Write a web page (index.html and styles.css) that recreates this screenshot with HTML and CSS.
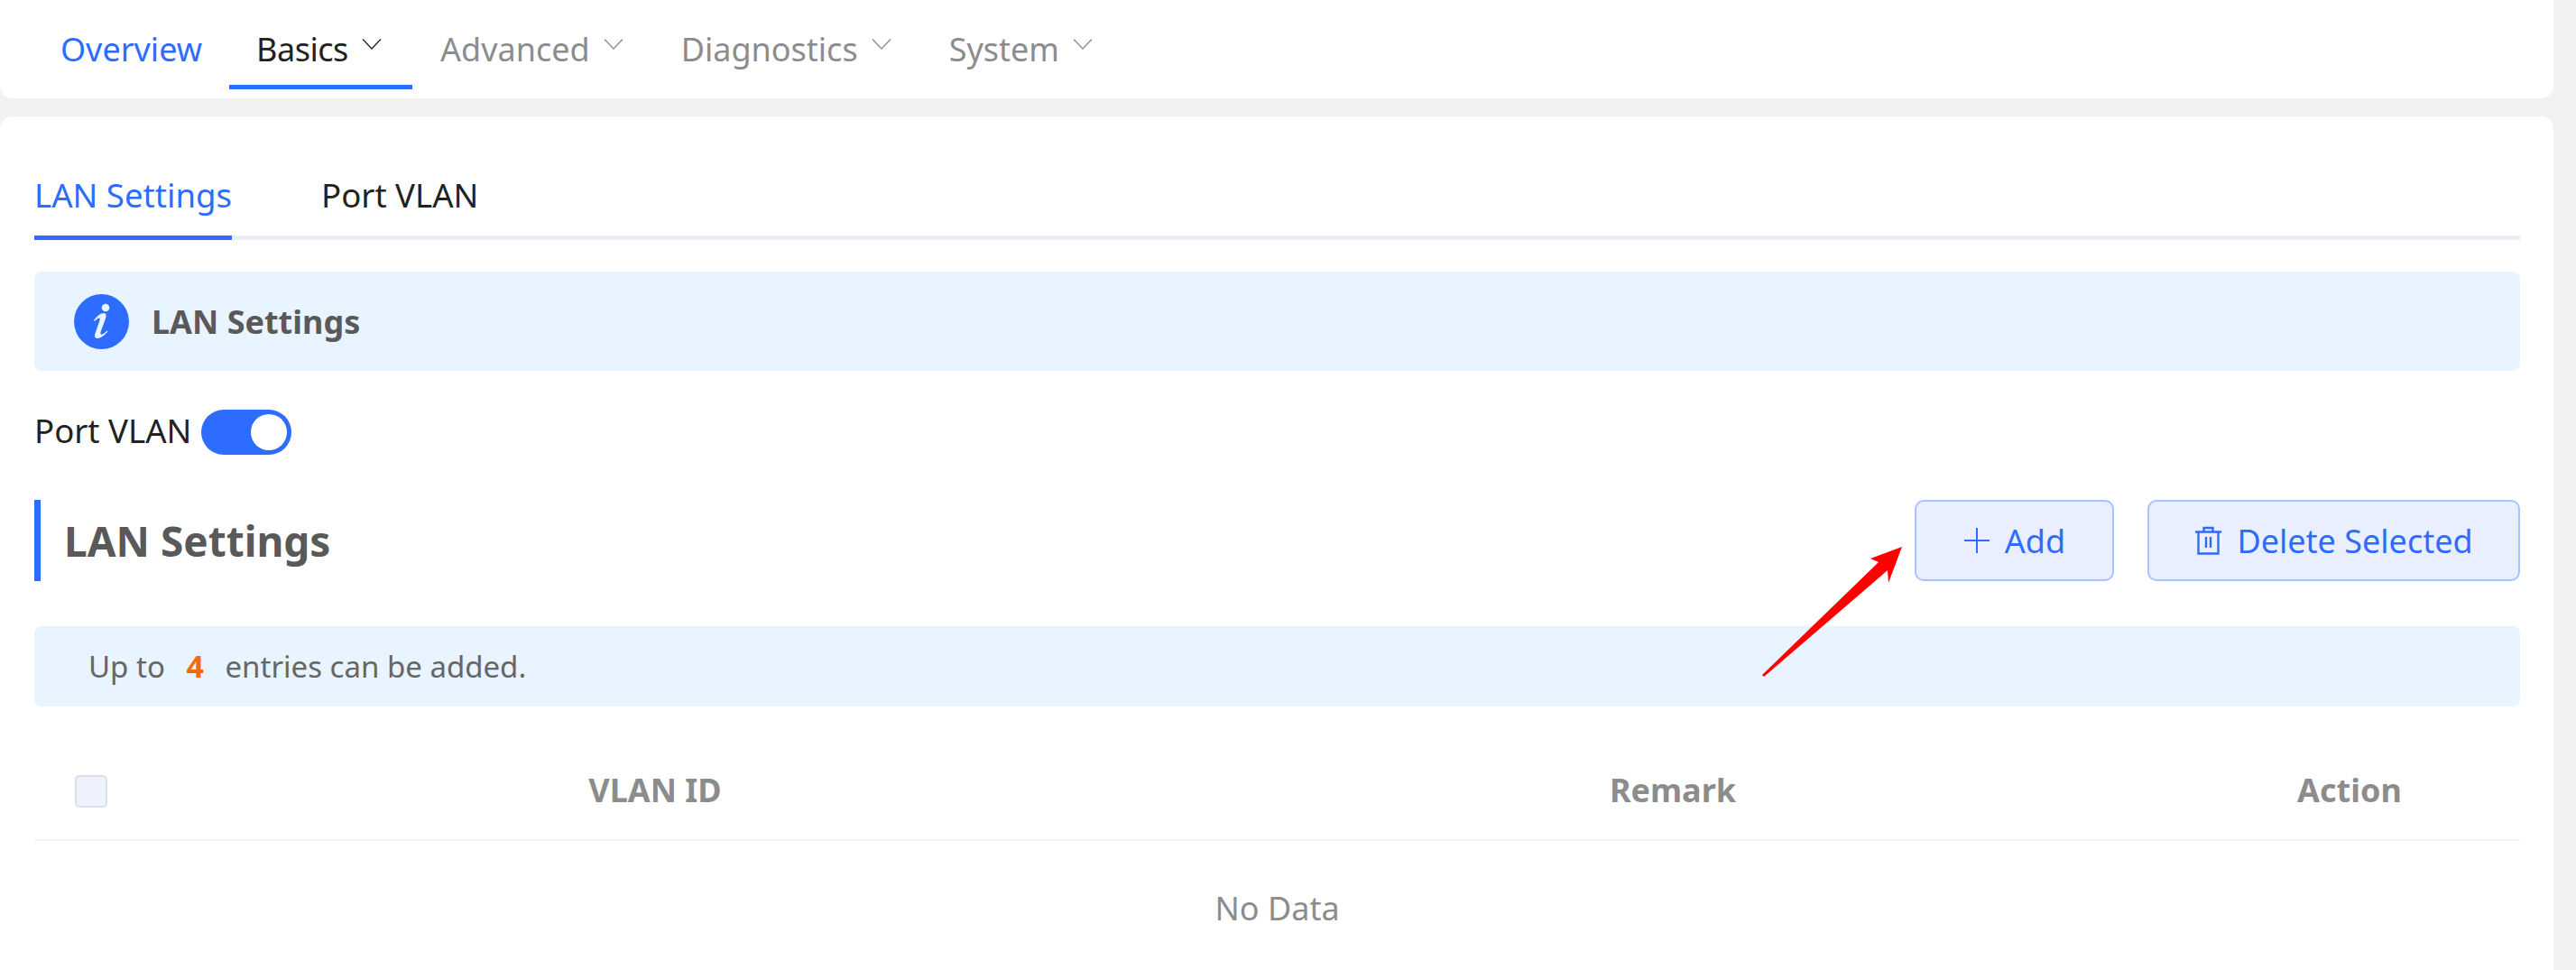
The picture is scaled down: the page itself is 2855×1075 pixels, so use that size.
FILE: index.html
```html
<!DOCTYPE html>
<html lang="en">
<head>
<meta charset="utf-8">
<title>LAN Settings</title>
<link rel="stylesheet" href="styles.css">
</head>
<body>
<div class="page">
  <nav class="topnav">
    <a class="nav-item nav-overview">Overview</a>
    <a class="nav-item nav-active">Basics<svg class="chev" viewBox="0 0 22 14"><path d="M1 1.5 11 12 21 1.5"/></svg></a>
    <a class="nav-item">Advanced<svg class="chev" viewBox="0 0 22 14"><path d="M1 1.5 11 12 21 1.5"/></svg></a>
    <a class="nav-item">Diagnostics<svg class="chev" viewBox="0 0 22 14"><path d="M1 1.5 11 12 21 1.5"/></svg></a>
    <a class="nav-item">System<svg class="chev" viewBox="0 0 22 14"><path d="M1 1.5 11 12 21 1.5"/></svg></a>
  </nav>
  <main class="card">
    <div class="tabs">
      <a class="tab tab-active">LAN Settings</a>
      <a class="tab">Port VLAN</a>
    </div>
    <div class="banner">
      <svg class="info-icon" viewBox="0 0 61 61"><circle cx="30.5" cy="30.5" r="30.5" fill="#2d6cff"/><circle cx="35" cy="15" r="4.300" fill="#e8f4ff"/><path d="M22 29C25 25 29 21 33 21C36 21 36 24 35 27L29.500 42C29 44 30 45 31 44.500C33 44 35 42 36.500 40.500L37.500 41.500C34 45 30 49 26 49C23 49 22.500 46.500 23.500 43.500L28.500 29C29 26.500 28 26 26.500 27C25 28 23.800 29 22.800 30Z" fill="#e8f4ff"/></svg>
      <span class="banner-text">LAN Settings</span>
    </div>
    <div class="switch-row">
      <span class="switch-label">Port VLAN</span>
      <span class="switch"><span class="switch-thumb"></span></span>
    </div>
    <div class="section-head">
      <h2 class="section-title">LAN Settings</h2>
      <div class="actions">
        <button class="btn btn-add"><svg class="btn-plus" viewBox="0 0 30 30"><path d="M15 1v28M1 15h28"/></svg>Add</button>
        <button class="btn btn-del"><svg class="btn-trash" viewBox="0 0 31 32"><path d="M1 6.500h29M4.500 6.500V30.500h22V6.500M10.500 6.500V2h10v4.500M13 12v12M18 12v12"/></svg>Delete Selected</button>
      </div>
    </div>
    <div class="note">Up to <b class="note-num">4</b> entries can be added.</div>
    <div class="thead">
      <span class="cell-check"><span class="checkbox"></span></span>
      <span class="th">VLAN ID</span>
      <span class="th">Remark</span>
      <span class="th">Action</span>
    </div>
    <div class="empty">No Data</div>
    <svg class="arrow" viewBox="0 0 170 160"><polygon points="157,6 142,46 141,32 4,150 2,148 131,23 122,19" fill="#ff0000"/></svg>
  </main>
</div>
</body>
</html>
```
FILE: styles.css
```css
* { box-sizing: border-box; }
html, body { margin: 0; padding: 0; height: 100%; overflow: hidden; }
body {
  background: #f2f2f2;
  font-family: "Noto Sans", "Open Sans", sans-serif;
  color: #222;
}
.page { width: 2830px; }
.topnav {
  height: 109px;
  background: #fff;
  border-radius: 0 0 14px 14px;
  display: flex;
  padding-left: 35px;
}
.nav-item {
  height: 99px;
  padding: 32px 32px 0;
  font-size: 36px;
  line-height: 46px;
  color: #8c8c8c;
  display: flex;
  align-items: flex-start;
  white-space: nowrap;
}
.nav-overview { color: #2d6cff; padding-right: 30px; }
.nav-active {
  color: #222;
  letter-spacing: -0.5px;
  border-bottom: 5px solid #2d6cff;
  width: 203px;
  padding-left: 30px;
  margin-right: -1px;
}
.chev { width: 22px; height: 14px; margin: 10px 0 0 15px; fill: none; stroke: currentColor; stroke-width: 1.3; flex: none; }
.card {
  position: relative;
  margin-top: 20px;
  height: 960px;
  background: #fff;
  border-radius: 14px 14px 0 0;
  padding: 0 37px 0 38px;
}
.tabs {
  height: 137px;
  display: flex;
  align-items: flex-end;
  gap: 99px;
  border-bottom: 5px solid #ebeef5;
}
.tab {
  height: 75px;
  margin-bottom: -5px;
  font-size: 36.6px;
  line-height: 46px;
  white-space: nowrap;
  padding-top: 2px;
}
.tab-active { color: #2d6cff; border-bottom: 5px solid #2d6cff; }
.banner {
  margin-top: 35px;
  height: 110px;
  background: #e8f4ff;
  border-radius: 8px;
  display: flex;
  align-items: center;
  padding-left: 44px;
  gap: 25px;
}
.info-icon { width: 61px; height: 61px; }
.banner-text { font-size: 36px; font-weight: 700; color: #595959; }
.switch-row {
  margin-top: 43px;
  height: 50px;
  display: flex;
  align-items: center;
  gap: 11px;
}
.switch-label { font-size: 36.6px; margin-bottom: 4px; }
.switch {
  width: 100px;
  height: 50px;
  border-radius: 25px;
  background: #2d6cff;
  display: flex;
  justify-content: flex-end;
  align-items: center;
  padding-right: 5px;
}
.switch-thumb { width: 40px; height: 40px; border-radius: 50%; background: #fff; }
.section-head {
  margin-top: 50px;
  height: 90px;
  display: flex;
  align-items: center;
  justify-content: space-between;
}
.section-title {
  margin: 0;
  height: 90px;
  line-height: 90px;
  border-left: 7px solid #2d6cff;
  padding-left: 26px;
  font-size: 46px;
  font-weight: 700;
  color: #595959;
}
.actions { display: flex; gap: 37px; }
.btn {
  height: 90px;
  border: 2px solid #a8c2ff;
  border-radius: 10px;
  background: #e9effe;
  color: #2d6cff;
  font: 36px "Noto Sans", "Open Sans", sans-serif;
  display: flex;
  align-items: center;
  justify-content: center;
  padding: 0;
}
.btn-add { width: 221px; gap: 16px; }
.btn-del { width: 413px; gap: 16px; }
.btn-plus { width: 30px; height: 30px; fill: none; stroke: currentColor; stroke-width: 2; }
.btn-trash { width: 31px; height: 32px; fill: none; stroke: currentColor; stroke-width: 2.4; }
.note {
  margin-top: 50px;
  height: 89px;
  background: #e8f4ff;
  border-radius: 8px;
  padding-left: 60px;
  font-size: 33px;
  line-height: 89px;
  color: #666;
}
.note-num { color: #f56a00; margin: 0 15px; font-size: 34px; }
.thead {
  height: 149px;
  padding-top: 41px;
  border-bottom: 2px solid #f0f4f8;
  display: grid;
  grid-template-columns: 121px 1134px 1122px 378px;
  align-items: center;
}
.cell-check { display: flex; padding-left: 45px; }
.checkbox {
  width: 36px;
  height: 36px;
  background: #edf2fc;
  border: 2px solid #dcdfe6;
  border-radius: 5px;
}
.th { text-align: center; font-size: 36px; font-weight: 700; color: #8c8c8c; margin-bottom: 3px; }
.empty {
  padding-top: 52px;
  text-align: center;
  font-size: 36px;
  line-height: 46px;
  color: #8c8c8c;
}
.arrow { position: absolute; left: 1951px; top: 471px; width: 170px; height: 160px; }
```
